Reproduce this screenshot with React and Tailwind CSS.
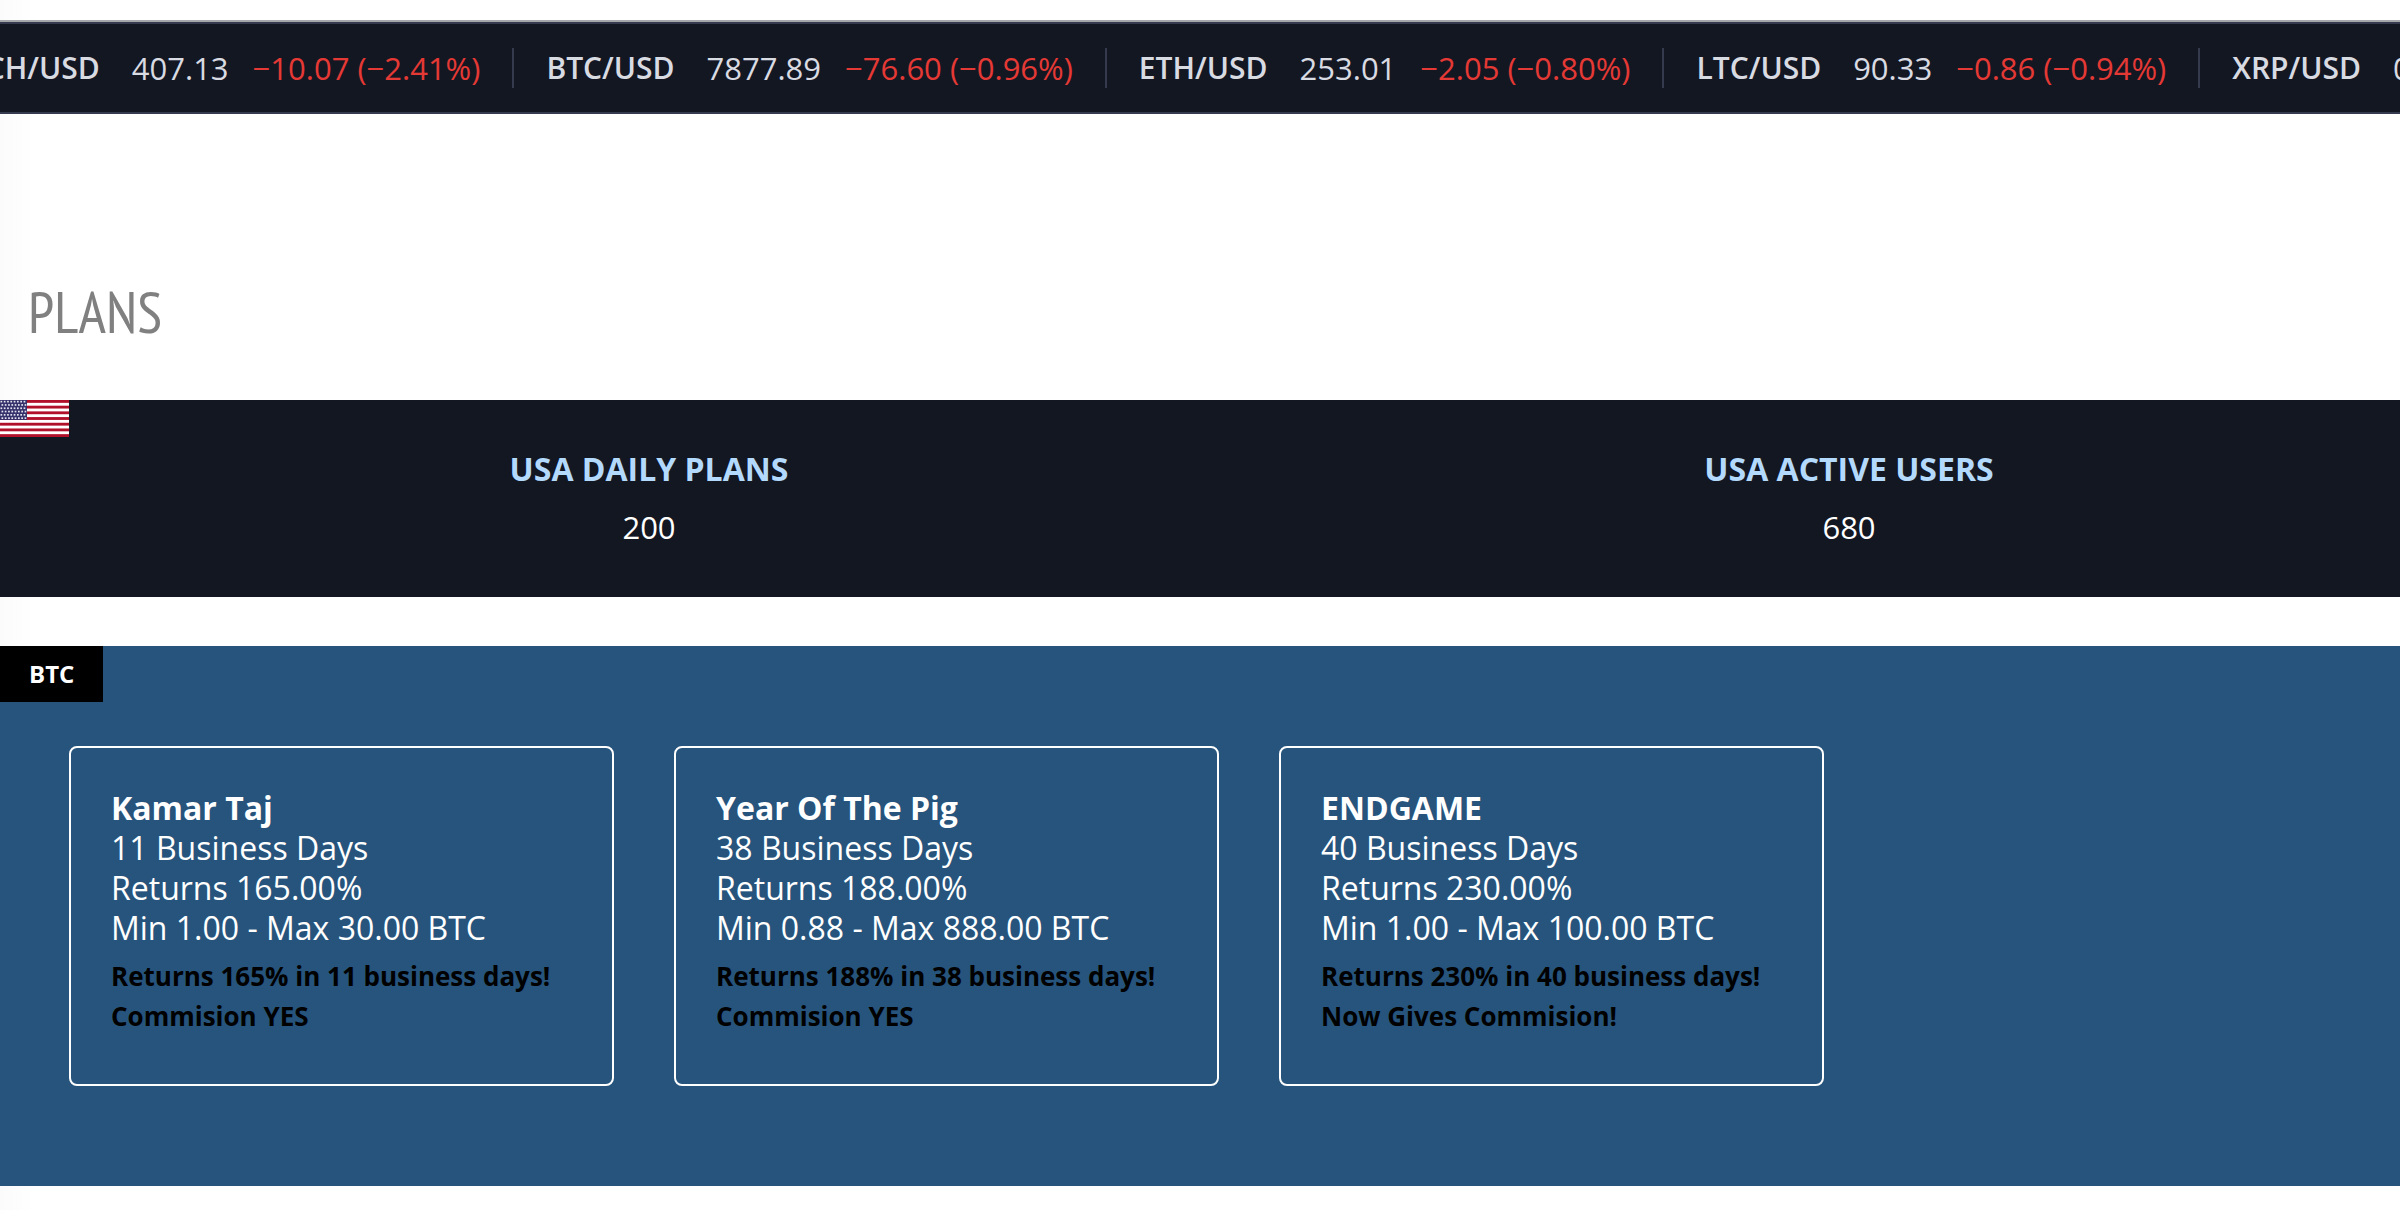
const quotes = [
  { symbol: "BCH/USD", price: "407.13", change: "−10.07 (−2.41%)" },
  { symbol: "BTC/USD", price: "7877.89", change: "−76.60 (−0.96%)" },
  { symbol: "ETH/USD", price: "253.01", change: "−2.05 (−0.80%)" },
  { symbol: "LTC/USD", price: "90.33", change: "−0.86 (−0.94%)" },
  { symbol: "XRP/USD", price: "0.38", change: "−0.01 (−1.20%)" },
];

const stats = [
  { label: "USA DAILY PLANS", value: "200" },
  { label: "USA ACTIVE USERS", value: "680" },
];

const plans = [
  {
    name: "Kamar Taj",
    lines: ["11 Business Days", "Returns 165.00%", "Min 1.00 - Max 30.00 BTC"],
    notes: ["Returns 165% in 11 business days!", "Commision YES"],
  },
  {
    name: "Year Of The Pig",
    lines: ["38 Business Days", "Returns 188.00%", "Min 0.88 - Max 888.00 BTC"],
    notes: ["Returns 188% in 38 business days!", "Commision YES"],
  },
  {
    name: "ENDGAME",
    lines: ["40 Business Days", "Returns 230.00%", "Min 1.00 - Max 100.00 BTC"],
    notes: ["Returns 230% in 40 business days!", "Now Gives Commision!"],
  },
];

function Ticker() {
  return (
    <div className="flex justify-start overflow-hidden border-t-2 border-[#a5a8ab] bg-[#131722] font-['Trebuchet_MS','Open_Sans',sans-serif]">
      <ul className="-ml-[66px] flex h-[92px] min-w-full shrink-0 items-center border-y-2 border-[#363a4f] text-[31px] leading-10 whitespace-nowrap text-[#d9dbe3]">
        {quotes.map((q) => (
          <li key={q.symbol} className="flex h-10 shrink-0 items-center border-r-2 border-[#363a4f] pr-8 pl-8">
            <span className="text-[30px] font-semibold">{q.symbol}</span>
            <span className="ml-8">{q.price}</span>
            <span className="ml-6 text-[#e53935]">{q.change}</span>
          </li>
        ))}
      </ul>
    </div>
  );
}

function Flag() {
  const stars = [];
  for (let row = 0; row < 6; row++) {
    for (let i = 0; i < 8; i++) {
      const x = 1 + i * 3.3 + (row % 2 ? 1 : 0);
      if (x < 26) {
        stars.push(
          <rect key={row + "-" + i} x={x - 0.5} y={0.8 + row * 3.3} width="1.7" height="1.7" fill="#e4e4f0" />
        );
      }
    }
  }
  return (
    <svg viewBox="0 0 69 37" className="block h-[37px] w-[69px]" preserveAspectRatio="none" role="img" aria-label="USA">
      <rect width="69" height="37" fill="#fff" />
      {[0, 1, 2, 3, 4, 5, 6].map((i) => (
        <rect key={i} y={(i * 74) / 13} width="69" height={37 / 13} fill="#b0102a" />
      ))}
      <rect width="27" height={(37 * 7) / 13} fill="#35316b" />
      {stars}
    </svg>
  );
}

function PlanCard({ plan }) {
  return (
    <article className="w-[545px] rounded-lg border-2 border-white px-10 pt-10 pb-12">
      <h3 className="text-[32px] leading-10 font-bold">{plan.name}</h3>
      {plan.lines.map((line) => (
        <p key={line} className="text-[32px] leading-10">{line}</p>
      ))}
      <div className="mt-2 text-[26px] leading-10 font-bold text-black">
        {plan.notes.map((note) => (
          <p key={note}>{note}</p>
        ))}
      </div>
    </article>
  );
}

export default function App() {
  return (
    <main className="min-h-screen bg-linear-to-r from-[#fbfbfb] to-white to-[36px] pt-5 pb-6 font-['Open_Sans',sans-serif]">
      <Ticker />
      <h1 className="mt-[166px] mb-[56px] pl-7 font-['PT_Sans_Narrow','Liberation_Sans_Narrow','Open_Sans',sans-serif] text-[58px] leading-[64px] text-[#808080]">
        PLANS
      </h1>
      <section className="relative bg-[#131722]">
        <div className="absolute top-0 left-0">
          <Flag />
        </div>
        <dl className="grid grid-cols-2 pt-[45px] pb-11 text-center">
          {stats.map((s) => (
            <div key={s.label} className="pl-[98px]">
              <dt className="text-[32px] leading-[48px] font-bold text-[#b3dafc]">{s.label}</dt>
              <dd className="mt-2 text-[31px] leading-[52px] text-white">{s.value}</dd>
            </div>
          ))}
        </dl>
      </section>
      <section className="mt-[49px] bg-[#26547c] text-white">
        <h2 className="inline-flex h-14 items-center bg-black px-[29px] align-top text-2xl font-bold">BTC</h2>
        <div className="flex flex-wrap gap-[60px] px-[69px] pt-11 pb-[100px]">
          {plans.map((p) => (
            <PlanCard key={p.name} plan={p} />
          ))}
        </div>
      </section>
    </main>
  );
}
